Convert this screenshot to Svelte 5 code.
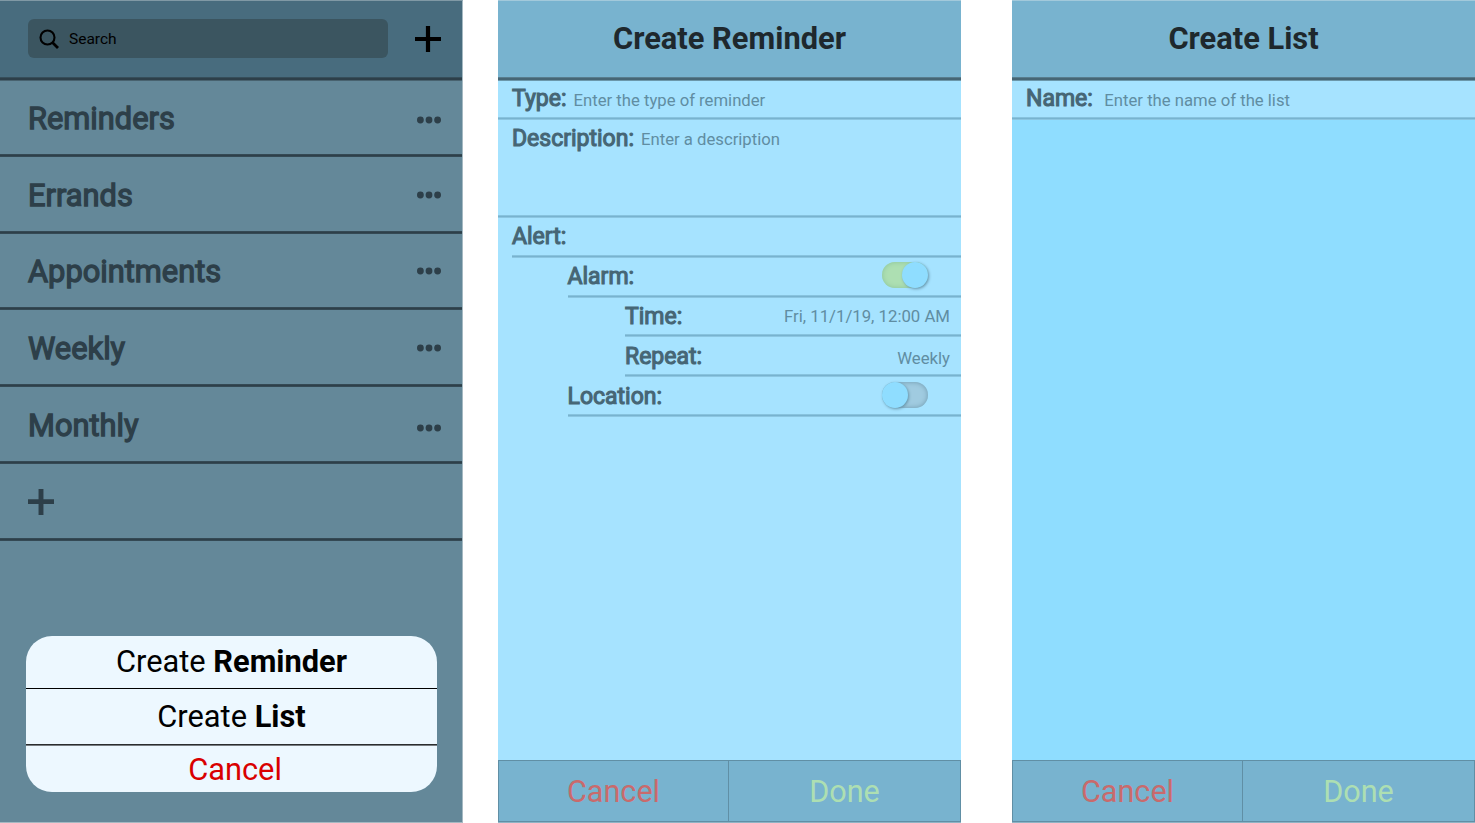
<script>
  const lists = [
    { name: 'Reminders', height: 76, pad: 2, dots: 4 },
    { name: 'Errands', height: 77, pad: 1, dots: 0 },
    { name: 'Appointments', height: 76, pad: 2, dots: 0 },
    { name: 'Weekly', height: 77, pad: 1, dots: 0 },
    { name: 'Monthly', height: 77, pad: 1, dots: 5 }
  ];
</script>

{#snippet footer()}
  <footer>
    <button class="cancel">Cancel</button>
    <button class="done">Done</button>
  </footer>
{/snippet}

{#snippet toggle(on)}
  <span class="toggle" class:on><i></i></span>
{/snippet}

<main>
  <section class="screen lists">
    <header>
      <div class="search">
        <svg width="20" height="20" viewBox="0 0 20 20"><circle cx="8.5" cy="8.5" r="7" fill="none" stroke="#000" stroke-width="2.1" /><path d="M13.2 13.3L19 19" stroke="#000" stroke-width="2.8" /></svg>
        <span>Search</span>
      </div>
      <svg class="plus" width="26" height="26" viewBox="0 0 26 26"><path d="M0 13H26M13 0V26" stroke="#000" stroke-width="4.2" /></svg>
    </header>
    {#each lists as l}
      <div class="row" style="height:{l.height}px;padding-bottom:{l.pad}px">
        <span class="name">{l.name}</span>
        <svg class="dots" width="24" height="8" viewBox="0 0 24 8" style="margin-top:{l.dots}px"><circle cx="3.4" cy="4" r="3.4" /><circle cx="12" cy="4" r="3.4" /><circle cx="20.6" cy="4" r="3.4" /></svg>
      </div>
    {/each}
    <div class="row last">
      <svg width="26" height="26" viewBox="0 0 26 26"><path d="M0 12.6H26M13 0V26" stroke="#2d3f49" stroke-width="4.9" /></svg>
    </div>
    <div class="sheet">
      <div class="s1">Create&nbsp;<b>Reminder</b></div>
      <div class="s2">Create&nbsp;<b>List</b></div>
      <div class="s3">Cancel</div>
    </div>
  </section>

  <section class="screen form">
    <header><h1>Create Reminder</h1></header>
    <div class="field type"><label>Type:</label><span class="hint">Enter the type of reminder</span></div>
    <div class="field desc"><label>Description:</label><span class="hint">Enter a description</span></div>
    <div class="field in0"><label>Alert:</label></div>
    <div class="field in1"><label>Alarm:</label>{@render toggle(true)}</div>
    <div class="field in2 time"><label>Time:</label><span class="value">Fri, 11/1/19, 12:00 AM</span></div>
    <div class="field in2 lower"><label>Repeat:</label><span class="value low">Weekly</span></div>
    <div class="field in1 lower"><label>Location:</label>{@render toggle(false)}</div>
    {@render footer()}
  </section>

  <section class="screen form list">
    <header><h1>Create List</h1></header>
    <div class="field type"><label>Name:</label><span class="hint wide">Enter the name of the list</span></div>
    {@render footer()}
  </section>
</main>

<style>
  :global(body) { margin: 0; background: #fff; }
  main {
    display: flex;
    width: 1475px;
    height: 823px;
    overflow: hidden;
    font-family: Roboto, sans-serif;
  }
  .screen {
    box-sizing: border-box;
    display: flex;
    flex-direction: column;
    width: 463px;
    height: 823px;
    flex: none;
    border-top: 1px solid #a2c9db;
    border-bottom: 1px solid #8fb4c5;
  }
  .lists {
    background: #648899;
    border-top-color: #8099a5;
    border-right: 1px solid #a5b9c2;
    border-bottom: 1px solid #a5b9c2;
    margin-right: 35px;
  }
  .form { background: #a6e3ff; margin-right: 51px; }
  .form.list { background: #8fddff; margin-right: 0; }
  header {
    box-sizing: border-box;
    height: 80px;
    flex: none;
    padding-bottom: 4px;
    background: linear-gradient(#587d8e 1px, #466675 1px 3px, #6b97aa 3px) bottom / 100% 4px no-repeat #78b3cf;
    display: flex;
    align-items: center;
    justify-content: center;
  }
  .lists header {
    background: linear-gradient(#364e5a 1px, #2d3f49 1px 3px, #48626f 3px) bottom / 100% 4px no-repeat #486c7e;
    justify-content: flex-start;
    padding-left: 28px;
  }
  .search {
    width: 360px;
    height: 39px;
    border-radius: 6px;
    background: #3b5560;
    display: flex;
    align-items: center;
    padding-left: 11px;
    box-sizing: border-box;
    margin-bottom: 1px;
  }
  .search span { font-size: 15.5px; margin-left: 10px; }
  .plus { margin-left: 27px; }
  h1 { margin: 0 0 2px; font-size: 30.85px; font-weight: 700; color: #1e282d; }
  .row {
    box-sizing: border-box;
    flex: none;
    background: linear-gradient(#344954 1px, #2d3f49 1px 2px, #344954 2px) bottom / 100% 3px no-repeat;
    display: flex;
    align-items: center;
    justify-content: space-between;
    padding: 0 21px 0 28px;
  }
  .row.last { height: 77px; padding-bottom: 2px; }
  .name { font-size: 30.8px; color: #2d3f49; -webkit-text-stroke: 1.3px #2d3f49; }
  .dots { fill: #2d3f49; }
  .sheet {
    margin: 95px 25px 0 26px;
    height: 156px;
    border-radius: 26px;
    background: #edf8ff;
    overflow: hidden;
    font-size: 30.8px;
    display: flex;
    flex-direction: column;
    flex: none;
  }
  .sheet div { display: flex; align-items: center; justify-content: center; box-sizing: border-box; }
  .s1 { height: 53px; padding-bottom: 1px; border-bottom: 1px solid #000; }
  .s2 { height: 57px; padding-bottom: 3px; background: linear-gradient(#2b2d2e 1px, #777c80 1px) bottom / 100% 2px no-repeat; }
  .s3 { height: 46px; color: #d90000; padding: 0 0 0 7px; }
  .field {
    box-sizing: border-box;
    height: 40px;
    flex: none;
    display: flex;
    align-items: center;
    padding-bottom: 3px;
    background: linear-gradient(#88c3de 1px, #78b3cf 1px 2px, #8cc6e1 2px) bottom / 100% 3px no-repeat #a6e3ff;
    margin-left: 14px;
  }
  .type { margin-left: 0; padding-left: 14px; height: 39px; }
  .type label { margin-top: -2px; }
  .type .hint { margin-top: 2px; }
  .desc { margin-left: 0; padding: 5px 0 0 14px; height: 98px; align-items: flex-start; }
  .desc .hint { margin-top: 5px; }
  .in1 { margin-left: 69.5px; }
  .in2 { margin-left: 127px; }
  .time { height: 39px; }
  label { font-size: 23px; color: #466675; -webkit-text-stroke: 1.1px #466675; }
  .lower label { margin-top: 2px; }
  .hint { font-size: 16.7px; color: #608da2; margin-left: 7px; }
  .wide { margin-left: 11.5px; }
  .value { font-size: 16.75px; color: #608da2; margin-left: auto; margin-right: 11px; }
  .low { padding-top: 4px; }
  .toggle {
    margin-left: auto;
    margin-top: -2px;
    margin-right: 33px;
    width: 46px;
    height: 26px;
    border-radius: 13px;
    background: #a0cbe0;
    box-shadow: inset 0 0 5px #6d99ad;
    display: flex;
  }
  .toggle i { width: 26px; height: 26px; border-radius: 50%; background: #8fddff; box-shadow: 1px 1px 3px #6594a9; }
  .toggle.on { margin-top: -3px; background: #addfb2; box-shadow: inset 0 0 5px #8ac39b; justify-content: flex-end; }
  footer {
    box-sizing: border-box;
    margin-top: auto;
    height: 62px;
    display: flex;
    border: 1px solid #608fa5;
    background: #78b3cf;
    flex: none;
  }
  footer button {
    border: 0;
    background: none;
    padding: 0;
    font: 30.6px Roboto, sans-serif;
    width: 229px;
  }
  .cancel { color: #c96a6c; }
  footer .done { color: #addfb2; border-left: 1px solid #608fa5; width: 232px; }
</style>
